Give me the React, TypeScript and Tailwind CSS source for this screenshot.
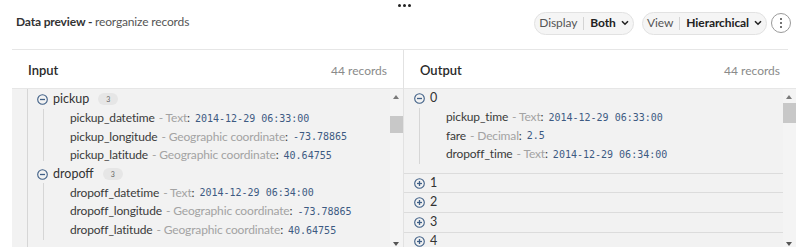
import React from "react";

const sans = { fontFamily: "Lato, 'Noto Sans', sans-serif" } as React.CSSProperties;

function MinusIcon() {
  return (
    <svg width="11" height="11" viewBox="0 0 11 11" className="shrink-0">
      <circle cx="5.5" cy="5.5" r="4.8" fill="none" stroke="#3f5f86" strokeWidth="1.1" />
      <line x1="3" y1="5.5" x2="8" y2="5.5" stroke="#3f5f86" strokeWidth="1.3" />
    </svg>
  );
}

function PlusIcon() {
  return (
    <svg width="11" height="11" viewBox="0 0 11 11" className="shrink-0">
      <circle cx="5.5" cy="5.5" r="4.8" fill="none" stroke="#3f5f86" strokeWidth="1.1" />
      <line x1="3" y1="5.5" x2="8" y2="5.5" stroke="#3f5f86" strokeWidth="1.3" />
      <line x1="5.5" y1="3" x2="5.5" y2="8" stroke="#3f5f86" strokeWidth="1.3" />
    </svg>
  );
}

function Chevron() {
  return (
    <svg width="8" height="6" viewBox="0 0 8 6" className="ml-[5px]">
      <path d="M1 1.2 L4 4.2 L7 1.2" fill="none" stroke="#222" strokeWidth="1.6" />
    </svg>
  );
}

function Field({ name, type, value }: { name: string; type: string; value: string }) {
  return (
    <div className="flex h-[18.7px] items-center whitespace-nowrap tracking-[-0.15px]">
      <span className="text-[12px] text-[#3a3a3a]">{name}</span>
      <span className="ml-[4px] text-[12px] text-[#a3a3a3]">- {type}</span>
      <span className="text-[12px] text-[#3a3a3a]">:</span>
      <span
        className="ml-[5px] text-[10px] tracking-normal text-[#3d5a82]"
        style={{ fontFamily: "'DejaVu Sans Mono', monospace" }}
      >
        {value}
      </span>
    </div>
  );
}

function Badge() {
  return (
    <span className="ml-[9px] flex h-[12px] w-[20px] items-center justify-center rounded-full bg-[#e6e6e6] text-[7px] text-[#666]">
      3
    </span>
  );
}

function Scrollbar({ thumbTop, thumbH }: { thumbTop: number; thumbH: number }) {
  return (
    <div className="relative w-[13px] shrink-0 bg-[#f4f4f4]">
      <div className="absolute left-[3px] top-[6px] h-0 w-0 border-x-[3.5px] border-b-[4px] border-x-transparent border-b-[#7a7a7a]" />
      <div className="absolute left-0 w-[13px] bg-[#c8c8c8]" style={{ top: thumbTop, height: thumbH }} />
      <div className="absolute bottom-[1px] left-[3px] h-0 w-0 border-x-[3.5px] border-t-[4px] border-x-transparent border-t-[#555]" />
    </div>
  );
}

function PillButton({ label, value, w }: { label: string; value: string; w: string }) {
  return (
    <div className={`flex h-[23px] items-center justify-center rounded-full border border-[#e2e2e2] bg-[#f5f5f5] text-[12px] tracking-[-0.1px] ${w}`}>
      <span className="text-[#555]">{label}</span>
      <span className="mx-[6px] h-[13px] w-px bg-[#d4d4d4]" />
      <span className="font-bold text-[#222]">{value}</span>
      <Chevron />
    </div>
  );
}

export default function App() {
  return (
    <div className="relative h-[249px] w-[800px] overflow-hidden bg-white" style={sans}>
      <div className="absolute left-[398px] top-[4px] flex gap-[2px]">
        <span className="h-[3px] w-[3px] rounded-full bg-[#222]" />
        <span className="h-[3px] w-[3px] rounded-full bg-[#222]" />
        <span className="h-[3px] w-[3px] rounded-full bg-[#222]" />
      </div>

      {/* Header */}
      <div className="mx-3 flex h-[50px] items-center justify-between border-b border-[#e6e6e6] pb-[3px] pl-[4px]">
        <div className="pb-[3px] text-[12px] tracking-[-0.15px] text-[#555]">
          <span className="font-bold text-[#333]">Data preview - </span>
          reorganize records
        </div>
        <div className="mr-[-3px] flex items-center">
          <PillButton label="Display" value="Both" w="w-[100px]" />
          <div className="ml-[8px]">
            <PillButton label="View" value="Hierarchical" w="w-[125px]" />
          </div>
          <div className="ml-[4px] flex h-[20px] w-[20px] flex-col items-center justify-center gap-[2px] rounded-full border border-[#9a9a9a]">
            <span className="h-[2px] w-[2px] rounded-full bg-[#444]" />
            <span className="h-[2px] w-[2px] rounded-full bg-[#444]" />
            <span className="h-[2px] w-[2px] rounded-full bg-[#444]" />
          </div>
        </div>
      </div>

      {/* Panels */}
      <div className="flex pl-3 pr-[3px]">
        {/* Input */}
        <div className="flex w-[392px] flex-col border-r border-[#e2e2e2]">
          <div className="flex h-[39px] items-center justify-between border-b border-[#e6e6e6] pl-4 pr-[16px] pt-[4px]">
            <span className="text-[13px] font-semibold text-[#2a2a2a]">Input</span>
            <span className="text-[12px] text-[#8a8a8a]">44 records</span>
          </div>
          <div className="flex h-[158px] bg-[#f2f2f2]">
            <div className="flex flex-1 pl-[15px]">
              <div className="w-px self-stretch bg-[#d6d6d6]" />
              <div className="flex flex-col pl-[9px] pt-[1px]">
                <div className="flex h-[18.7px] items-center">
                  <MinusIcon />
                  <span className="ml-[5px] text-[12.5px] text-[#333]">pickup</span>
                  <Badge />
                </div>
                <div className="flex">
                  <div className="ml-[6px] mb-[4px] w-px bg-[#d6d6d6]" />
                  <div className="flex flex-col pl-[26px]">
                    <Field name="pickup_datetime" type="Text" value="2014-12-29 06:33:00" />
                    <Field name="pickup_longitude" type="Geographic coordinate" value="-73.78865" />
                    <Field name="pickup_latitude" type="Geographic coordinate" value="40.64755" />
                  </div>
                </div>
                <div className="flex h-[18.7px] items-center">
                  <MinusIcon />
                  <span className="ml-[5px] text-[12.5px] text-[#333]">dropoff</span>
                  <Badge />
                </div>
                <div className="flex">
                  <div className="ml-[6px] w-px bg-[#d6d6d6]" />
                  <div className="flex flex-col pl-[26px]">
                    <Field name="dropoff_datetime" type="Text" value="2014-12-29 06:34:00" />
                    <Field name="dropoff_longitude" type="Geographic coordinate" value="-73.78865" />
                    <Field name="dropoff_latitude" type="Geographic coordinate" value="40.64755" />
                  </div>
                </div>
              </div>
            </div>
            <Scrollbar thumbTop={27} thumbH={17} />
          </div>
        </div>

        {/* Output */}
        <div className="flex w-[392px] flex-col">
          <div className="flex h-[39px] items-center justify-between border-b border-[#e6e6e6] pl-4 pr-[16px] pt-[4px]">
            <span className="text-[13px] font-semibold text-[#2a2a2a]">Output</span>
            <span className="text-[12px] text-[#8a8a8a]">44 records</span>
          </div>
          <div className="flex h-[158px] bg-[#f2f2f2]">
            <div className="flex flex-1 flex-col">
              <div className="border-b border-[#dcdcdc] pb-[9px]">
                <div className="flex h-[18.7px] items-center pl-[10px]">
                  <MinusIcon />
                  <span className="ml-[5px] text-[12.5px] text-[#333]">0</span>
                </div>
                <div className="flex">
                  <div className="ml-[15px] w-px bg-[#d6d6d6]" />
                  <div className="flex flex-col pl-[26px]">
                    <Field name="pickup_time" type="Text" value="2014-12-29 06:33:00" />
                    <Field name="fare" type="Decimal" value="2.5" />
                    <Field name="dropoff_time" type="Text" value="2014-12-29 06:34:00" />
                  </div>
                </div>
              </div>
              {["1", "2", "3", "4"].map((n) => (
                <div key={n} className="flex h-[19.6px] shrink-0 items-center border-b border-[#dcdcdc] pl-[10px]">
                  <PlusIcon />
                  <span className="ml-[5px] text-[12.5px] text-[#333]">{n}</span>
                </div>
              ))}
            </div>
            <Scrollbar thumbTop={14} thumbH={20} />
          </div>
        </div>
      </div>
    </div>
  );
}
